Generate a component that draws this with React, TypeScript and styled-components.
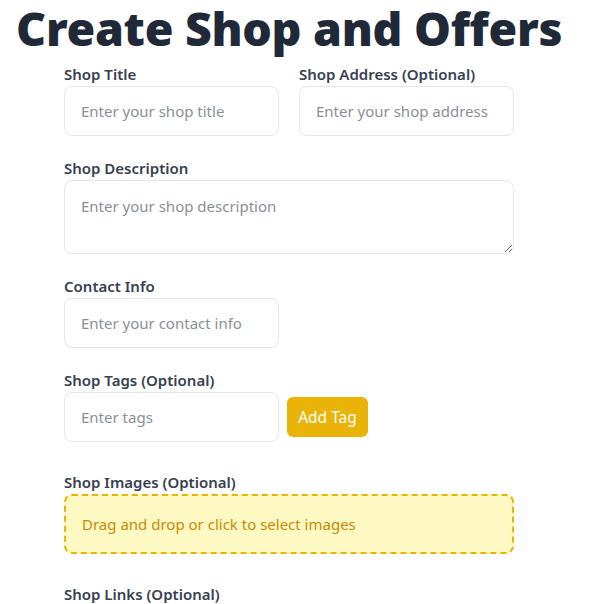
import React from "react";
import styled, { createGlobalStyle } from "styled-components";

const GlobalStyle = createGlobalStyle`
  body {
    margin: 0;
    background: #ffffff;
    font-family: "Noto Sans", "Open Sans", sans-serif;
    color: #1f2937;
  }
`;

const Page = styled.div`
  padding: 0 16px;
`;

const Title = styled.h1`
  margin: 0 0 6px;
  font-size: 46.5px;
  line-height: 56px;
  font-weight: 900;
  color: #1f2937;
  letter-spacing: -0.3px;
  white-space: nowrap;
`;

const Form = styled.form`
  width: 450px;
  margin-left: 48px;
  display: flex;
  flex-direction: column;
  gap: 20px;
`;

const Row = styled.div`
  display: grid;
  grid-template-columns: 215px 215px;
  column-gap: 20px;
`;

const Field = styled.div<{ $extra?: boolean }>`
  display: flex;
  flex-direction: column;
  padding-bottom: ${(p) => (p.$extra ? "8px" : "0")};
`;

const Label = styled.label`
  font-size: 15px;
  line-height: 24px;
  font-weight: 600;
  color: #374151;
`;

const Input = styled.input<{ $half?: boolean }>`
  box-sizing: border-box;
  width: ${(p) => (p.$half ? "215px" : "100%")};
  height: 50px;
  padding: 0 16px;
  border: 1px solid #e5e7eb;
  border-radius: 8px;
  font-family: inherit;
  font-size: 15px;
  color: #1f2937;
  outline: none;
  &::placeholder {
    color: #8b8f97;
  }
`;

const TextArea = styled.textarea`
  box-sizing: border-box;
  width: 100%;
  height: 74px;
  padding: 12px 16px;
  border: 1px solid #e5e7eb;
  border-radius: 8px;
  font-family: inherit;
  font-size: 15px;
  line-height: 26px;
  resize: vertical;
  outline: none;
  &::placeholder {
    color: #8b8f97;
  }
`;

const TagRow = styled.div`
  display: flex;
  align-items: center;
  gap: 8px;
`;

const AddButton = styled.button`
  height: 40px;
  width: 81px;
  border: none;
  border-radius: 6px;
  background: #eab308;
  color: #ffffff;
  font-family: inherit;
  font-size: 15.5px;
  cursor: pointer;
`;

const DropZone = styled.div`
  box-sizing: border-box;
  height: 60px;
  display: flex;
  align-items: center;
  padding: 0 16px;
  border: 2px dashed #eab308;
  border-radius: 8px;
  background: #fef9c3;
  color: #ca8a04;
  font-size: 15px;
`;

export default function App() {
  return (
    <Page>
      <GlobalStyle />
      <Title>Create Shop and Offers</Title>
      <Form onSubmit={(e) => e.preventDefault()}>
        <Row>
          <Field>
            <Label>Shop Title</Label>
            <Input placeholder="Enter your shop title" />
          </Field>
          <Field>
            <Label>Shop Address (Optional)</Label>
            <Input placeholder="Enter your shop address" />
          </Field>
        </Row>
        <Field>
          <Label>Shop Description</Label>
          <TextArea placeholder="Enter your shop description" />
        </Field>
        <Field>
          <Label>Contact Info</Label>
          <Input $half placeholder="Enter your contact info" />
        </Field>
        <Field $extra>
          <Label>Shop Tags (Optional)</Label>
          <TagRow>
            <Input $half placeholder="Enter tags" />
            <AddButton type="button">Add Tag</AddButton>
          </TagRow>
        </Field>
        <Field $extra>
          <Label>Shop Images (Optional)</Label>
          <DropZone>Drag and drop or click to select images</DropZone>
        </Field>
        <Field>
          <Label>Shop Links (Optional)</Label>
        </Field>
      </Form>
    </Page>
  );
}
